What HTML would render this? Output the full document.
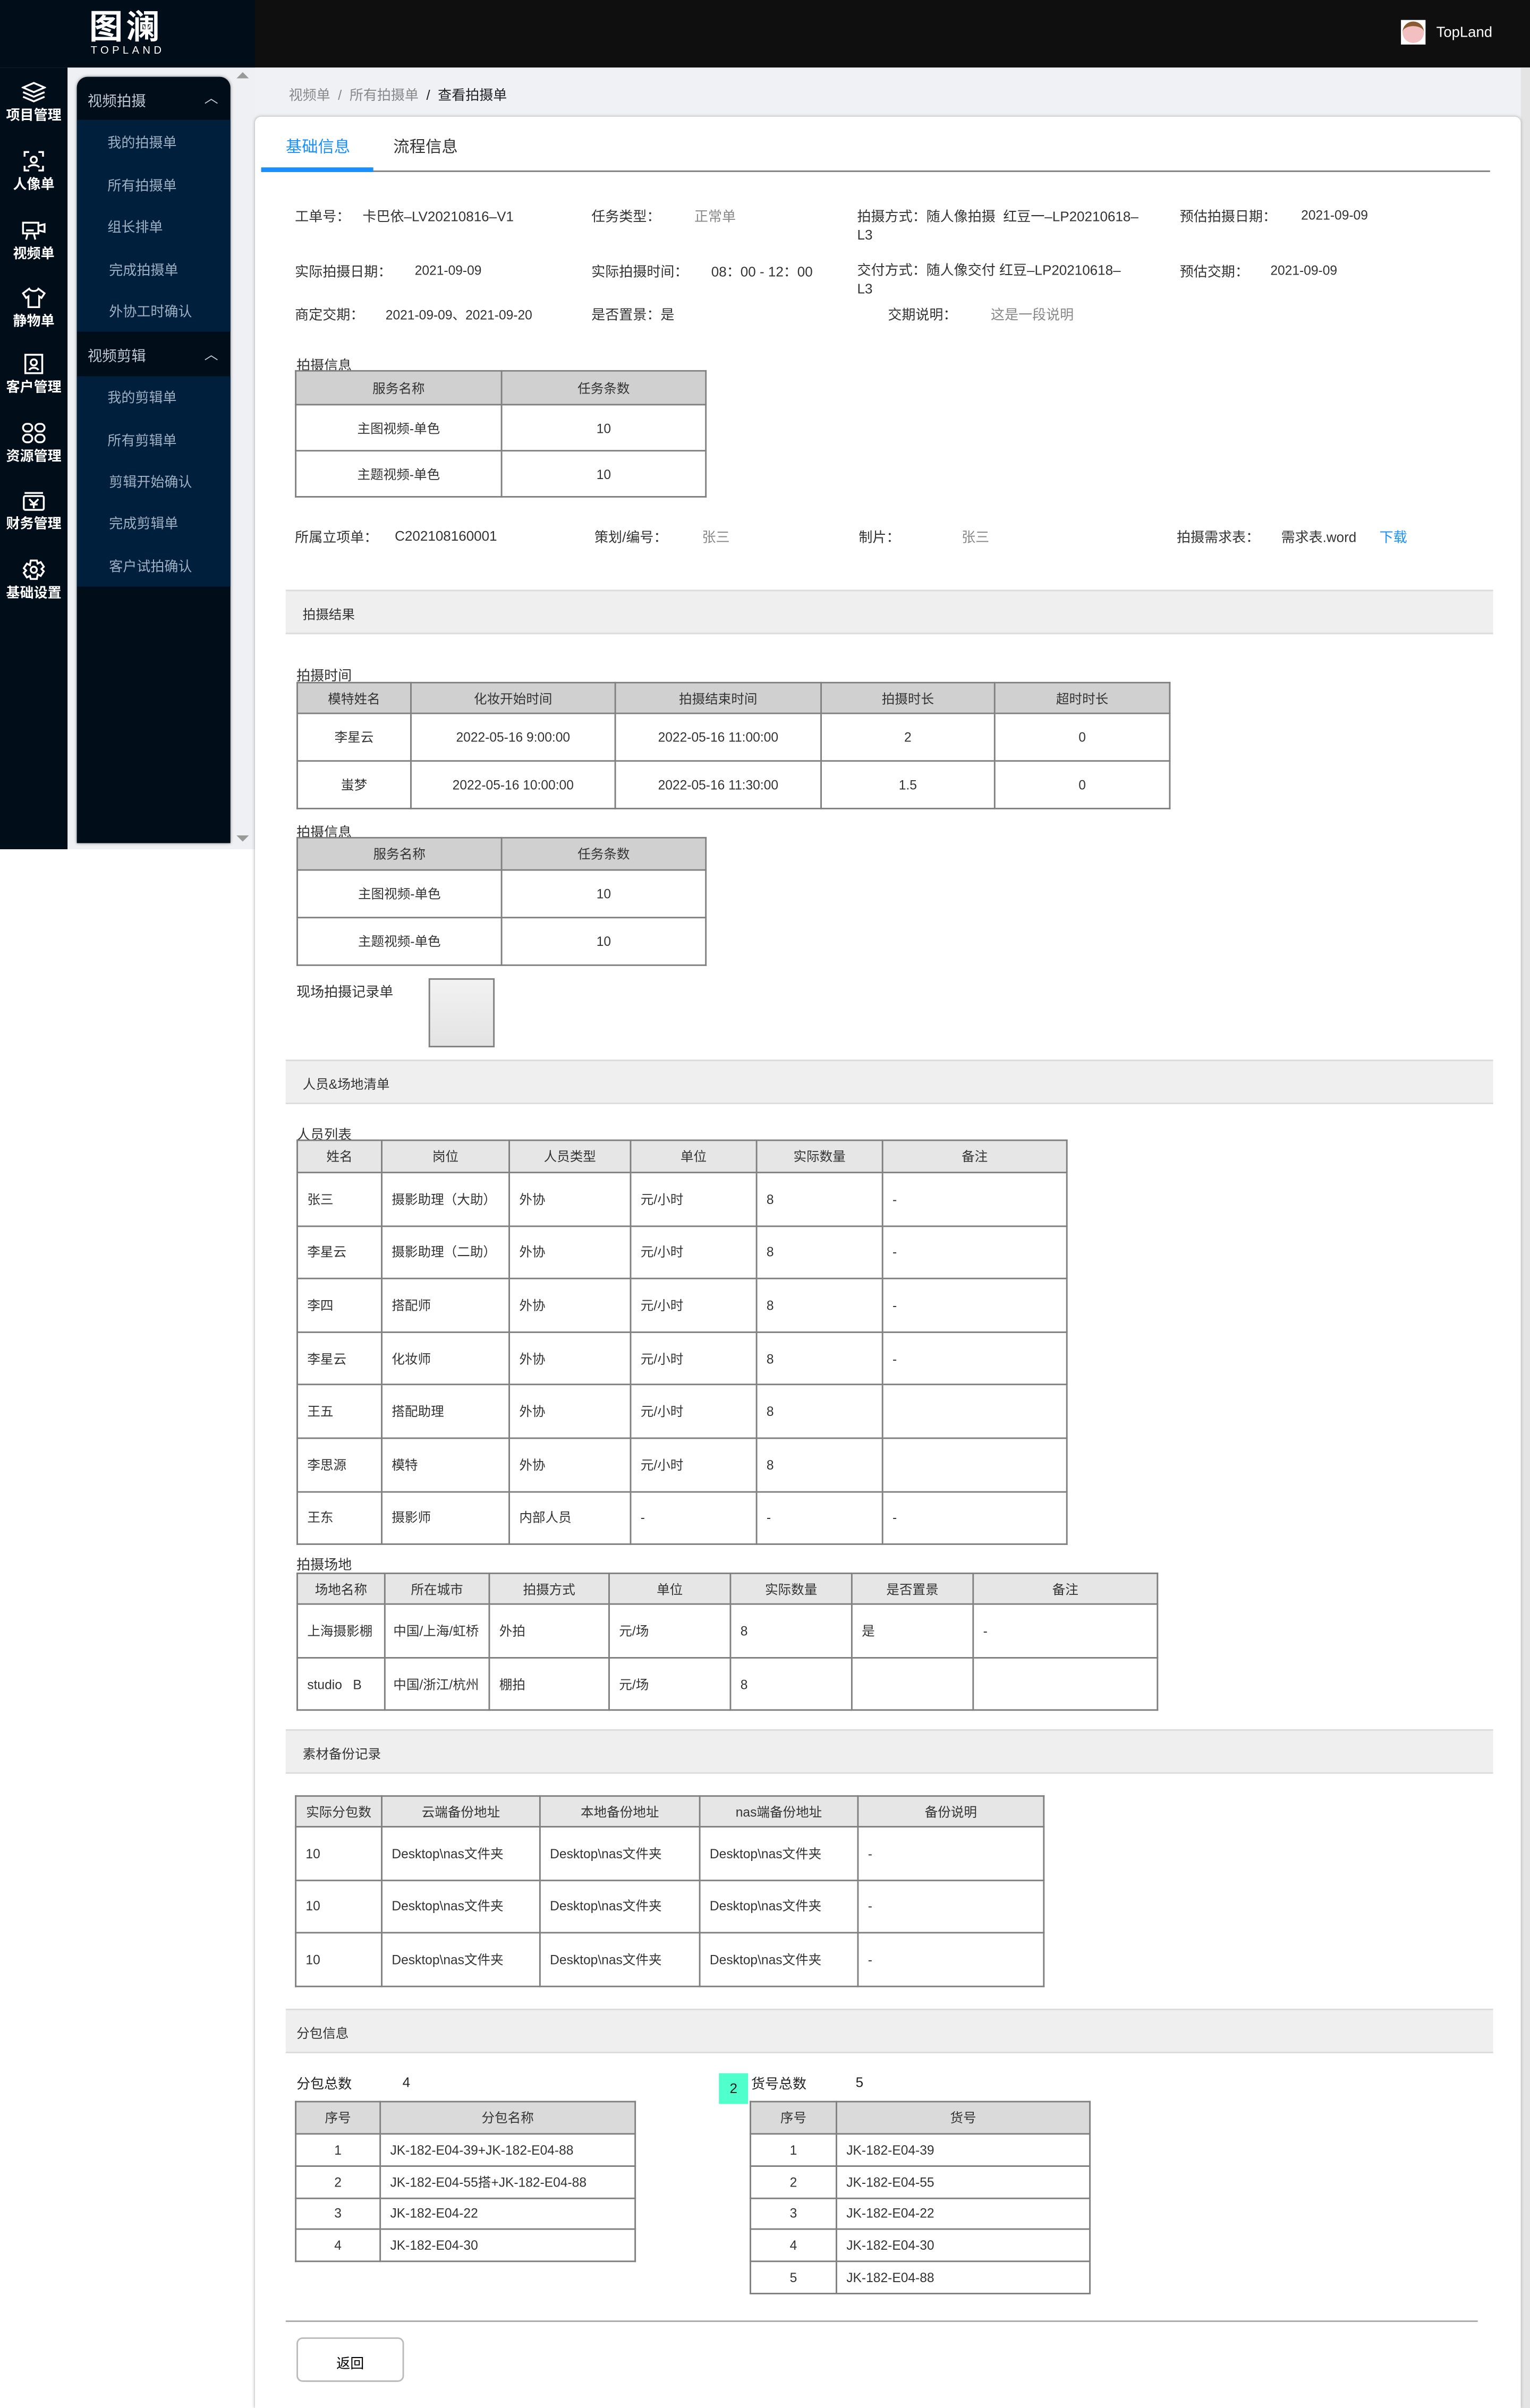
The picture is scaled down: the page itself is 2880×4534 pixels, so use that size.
<!DOCTYPE html>
<html><head><meta charset="utf-8">
<style>
*{margin:0;padding:0;box-sizing:border-box}
html,body{width:2880px;height:4534px;overflow:hidden;background:#fff}
#w{position:absolute;left:0;top:0;width:996px;height:1568px;transform:scale(2.891566);transform-origin:0 0;font-family:"Liberation Sans","Noto Sans CJK SC",sans-serif;color:#333;font-size:9px}
.a{position:absolute;white-space:nowrap}
table{position:absolute;border-collapse:collapse;table-layout:fixed;font-size:8.5px;color:#333}
td,th{border:0.8px solid #7f7f7f;text-align:center;font-weight:normal;overflow:hidden;white-space:nowrap}
th{background:#d0d0d0}
table.l th{background:#e6e6e6}
table.l td{text-align:left;padding-left:6px}
.sec{position:absolute;left:186px;width:786px;height:29px;background:#efefef;border-top:1px solid #dcdcdc;border-bottom:1px solid #dcdcdc;font-size:8.5px;padding:9px 0 0 11px}
.nav{position:absolute;left:0;width:44px;text-align:center;color:#fff;font-size:9px;font-weight:bold}
.nav svg{display:block;margin:0 auto 1px}
.sub{position:absolute;left:70px;color:#9fb0c4;font-size:9px}
.g{color:#888}
.v{font-size:8.5px;margin-top:1px}
</style></head><body><div id="w">
<div class="a" style="left:0;top:0;width:996px;height:44px;background:#0f0f0f"></div>
<div class="a" style="left:0;top:0;width:166px;height:44px;background:#020d1a"></div>
<div class="a" style="left:58px;top:2px;color:#fff;font-size:22px;font-weight:bold;letter-spacing:2px;font-family:'Noto Sans CJK SC',sans-serif;line-height:28px">图澜</div>
<div class="a" style="left:59px;top:30px;color:#fff;font-size:7px;letter-spacing:2.2px">TOPLAND</div>
<div class="a" style="left:912px;top:13px;width:16px;height:16px;background:#fff"><div style="margin:1px;width:14px;height:14px;border-radius:50%;background:#f2c0c0;border-top:3px solid #8a5a30"></div></div>
<div class="a" style="left:935px;top:16px;color:#fff;font-size:9.5px">TopLand</div>
<div class="a" style="left:0;top:44px;width:44px;height:509px;background:#020d1a"></div>
<div class="nav" style="top:53px"><svg width="16" height="14" viewBox="0 0 16 14" fill="none" stroke="#fff" stroke-width="1.2"><path d="M8 1L15 4 8 7 1 4Z M1 7l7 3 7-3 M1 10l7 3 7-3"/></svg>项目管理</div>
<div class="nav" style="top:98px"><svg width="14" height="14" viewBox="0 0 14 14" fill="none" stroke="#fff" stroke-width="1.2"><path d="M1 4V1h3M10 1h3v3M13 10v3h-3M4 13H1v-3"/><circle cx="7" cy="6" r="2"/><path d="M3.5 11c1-2 6-2 7 0"/></svg>人像单</div>
<div class="nav" style="top:143px"><svg width="16" height="14" viewBox="0 0 16 14" fill="none" stroke="#fff" stroke-width="1.2"><rect x="1" y="2" width="10" height="7"/><path d="M11 4l4-1v5l-4-1 M4 9l-1 4 M8 9l1 4 M3 7h5"/></svg>视频单</div>
<div class="nav" style="top:187px"><svg width="16" height="14" viewBox="0 0 16 14" fill="none" stroke="#fff" stroke-width="1.2"><path d="M5 1L1 4l2 3 1.5-1V13h7V6L13 7l2-3-4-3C10 3 6 3 5 1Z"/></svg>静物单</div>
<div class="nav" style="top:230px"><svg width="14" height="14" viewBox="0 0 14 14" fill="none" stroke="#fff" stroke-width="1.2"><rect x="1.5" y="1" width="11" height="12"/><circle cx="7" cy="6" r="2"/><path d="M4 11c1-2 5-2 6 0"/></svg>客户管理</div>
<div class="nav" style="top:275px"><svg width="16" height="14" viewBox="0 0 16 14" fill="none" stroke="#fff" stroke-width="1.2"><rect x="1" y="1" width="6" height="5" rx="2.5"/><rect x="9" y="1" width="6" height="5" rx="2.5"/><rect x="1" y="8" width="6" height="5" rx="2.5"/><rect x="9" y="8" width="6" height="5" rx="2.5"/></svg>资源管理</div>
<div class="nav" style="top:319px"><svg width="16" height="14" viewBox="0 0 16 14" fill="none" stroke="#fff" stroke-width="1.2"><path d="M2 2h12"/><rect x="1.5" y="4" width="13" height="9" rx="1"/><path d="M5 6l3 3 3-3M8 9v3M5.5 9.5h5"/></svg>财务管理</div>
<div class="nav" style="top:364px"><svg width="16" height="14" viewBox="0 0 16 14" fill="none" stroke="#fff" stroke-width="1.2"><path d="M6 1h4l.5 2 2-1 2 3-1.5 1.5 1.5 1.5-2 3-2-1L10 13H6l-.5-2-2 1-2-3L3 7.5 1.5 6l2-3 2 1Z"/><circle cx="8" cy="7" r="2"/></svg>基础设置</div>
<div class="a" style="left:44px;top:44px;width:122px;height:509px;background:#eef0f4"></div>
<div class="a" style="left:50px;top:50px;width:100px;height:499px;background:#020d1a;border-radius:7px 7px 0 0;box-shadow:0 0 2px #888"></div>
<div class="a" style="left:50px;top:78px;width:100px;height:138px;background:#001f3d"></div>
<div class="a" style="left:50px;top:245px;width:100px;height:137px;background:#001f3d"></div>
<div class="a" style="left:57px;top:58px;color:#bfc8d4;font-size:9.5px">视频拍摄</div>
<div class="a" style="left:133px;top:57px;color:#bfc8d4;font-size:9px">︿</div>
<div class="a" style="left:57px;top:224px;color:#bfc8d4;font-size:9.5px">视频剪辑</div>
<div class="a" style="left:133px;top:224px;color:#bfc8d4;font-size:9px">︿</div>
<div class="sub" style="top:86px">我的拍摄单</div>
<div class="sub" style="top:114px">所有拍摄单</div>
<div class="sub" style="top:141px">组长排单</div>
<div class="sub" style="top:169px;left:71px">完成拍摄单</div>
<div class="sub" style="top:196px;left:71px">外协工时确认</div>
<div class="sub" style="top:252px">我的剪辑单</div>
<div class="sub" style="top:280px">所有剪辑单</div>
<div class="sub" style="top:307px;left:71px">剪辑开始确认</div>
<div class="sub" style="top:334px;left:71px">完成剪辑单</div>
<div class="sub" style="top:362px;left:71px">客户试拍确认</div>
<div class="a" style="left:154px;top:47px;width:0;height:0;border-left:4px solid transparent;border-right:4px solid transparent;border-bottom:4px solid #999"></div>
<div class="a" style="left:154px;top:544px;width:0;height:0;border-left:4px solid transparent;border-right:4px solid transparent;border-top:4px solid #999"></div>
<div class="a" style="left:166px;top:44px;width:830px;height:1524px;background:#eff1f5"></div>
<div class="a" style="left:990px;top:44px;width:6px;height:1524px;background:#e4e4e4"></div>
<div class="a" style="left:188px;top:55px;font-size:9px;color:#888">视频单 &nbsp;/&nbsp; 所有拍摄单 &nbsp;<span style="color:#222">/ &nbsp;查看拍摄单</span></div>
<div class="a" style="left:166px;top:76px;width:824px;height:1492px;background:#fff;border-radius:4px 4px 0 0;box-shadow:0 0 2px #aaa"></div>
<div class="a" style="left:186px;top:88px;font-size:10.5px;color:#1890ff">基础信息</div>
<div class="a" style="left:256px;top:88px;font-size:10.5px;color:#333">流程信息</div>
<div class="a" style="left:170px;top:111px;width:800px;height:1px;background:#808080"></div>
<div class="a" style="left:170px;top:109px;width:73px;height:3px;background:#1890ff"></div>
<div class="a" style="left:192px;top:134px">工单号：</div><div class="a" style="left:236px;top:134px">卡巴依–LV20210816–V1</div>
<div class="a" style="left:385px;top:134px">任务类型：</div><div class="a g" style="left:452px;top:134px">正常单</div>
<div class="a" style="left:558px;top:134px">拍摄方式：随人像拍摄 &nbsp;红豆一–LP20210618–</div>
<div class="a" style="left:558px;top:148px">L3</div>
<div class="a" style="left:768px;top:134px">预估拍摄日期：</div><div class="a v" style="left:847px;top:134px">2021-09-09</div>
<div class="a" style="left:192px;top:170px">实际拍摄日期：</div><div class="a v" style="left:270px;top:170px">2021-09-09</div>
<div class="a" style="left:385px;top:170px">实际拍摄时间：</div><div class="a" style="left:463px;top:170px">08：00 - 12：00</div>
<div class="a" style="left:558px;top:169px">交付方式：随人像交付 红豆–LP20210618–</div>
<div class="a" style="left:558px;top:183px">L3</div>
<div class="a" style="left:768px;top:170px">预估交期：</div><div class="a v" style="left:827px;top:170px">2021-09-09</div>
<div class="a" style="left:192px;top:198px">商定交期：</div><div class="a v" style="left:251px;top:198px">2021-09-09、2021-09-20</div>
<div class="a" style="left:385px;top:198px">是否置景：是</div>
<div class="a" style="left:578px;top:198px">交期说明：</div><div class="a g" style="left:645px;top:198px">这是一段说明</div>
<div class="a" style="left:193px;top:231px">拍摄信息</div>
<table style="left:192px;top:241px;width:267px"><col width="134"><col width="133">
<tr style="height:22px"><th>服务名称</th><th>任务条数</th></tr>
<tr style="height:30px"><td>主图视频-单色</td><td>10</td></tr>
<tr style="height:30px"><td>主题视频-单色</td><td>10</td></tr></table>
<div class="a" style="left:192px;top:343px">所属立项单：</div><div class="a" style="left:257px;top:344px">C202108160001</div>
<div class="a" style="left:387px;top:343px">策划/编号：</div><div class="a g" style="left:457px;top:343px">张三</div>
<div class="a" style="left:559px;top:343px">制片：</div><div class="a g" style="left:626px;top:343px">张三</div>
<div class="a" style="left:766px;top:343px">拍摄需求表：</div><div class="a" style="left:834px;top:343px">需求表.word</div><div class="a" style="left:898px;top:343px;color:#1890ff">下载</div>
<div class="sec" style="top:384px">拍摄结果</div>
<div class="a" style="left:193px;top:433px">拍摄时间</div>
<table style="left:193px;top:444px;width:568px"><col width="74"><col width="133"><col width="134"><col width="113"><col width="114">
<tr style="height:20px"><th>模特姓名</th><th>化妆开始时间</th><th>拍摄结束时间</th><th>拍摄时长</th><th>超时时长</th></tr>
<tr style="height:31px"><td>李星云</td><td>2022-05-16 9:00:00</td><td>2022-05-16 11:00:00</td><td>2</td><td>0</td></tr>
<tr style="height:31px"><td>蚩梦</td><td>2022-05-16 10:00:00</td><td>2022-05-16 11:30:00</td><td>1.5</td><td>0</td></tr></table>
<div class="a" style="left:193px;top:535px">拍摄信息</div>
<table style="left:193px;top:545px;width:266px"><col width="133"><col width="133">
<tr style="height:21px"><th>服务名称</th><th>任务条数</th></tr>
<tr style="height:31px"><td>主图视频-单色</td><td>10</td></tr>
<tr style="height:31px"><td>主题视频-单色</td><td>10</td></tr></table>
<div class="a" style="left:193px;top:639px">现场拍摄记录单</div>
<div class="a" style="left:279px;top:637px;width:43px;height:45px;border:0.8px solid #7f7f7f;background:linear-gradient(#f2f2f2,#e3e3e3)"></div>
<div class="sec" style="top:690px">人员&amp;场地清单</div>
<div class="a" style="left:193px;top:732px">人员列表</div>
<table class="l" style="left:193px;top:742px;width:501px"><col width="55"><col width="83"><col width="79"><col width="82"><col width="82"><col width="120">
<tr style="height:21px"><th>姓名</th><th>岗位</th><th>人员类型</th><th>单位</th><th>实际数量</th><th>备注</th></tr>
<tr style="height:34.6px"><td>张三</td><td>摄影助理（大助）</td><td>外协</td><td>元/小时</td><td>8</td><td>-</td></tr>
<tr style="height:34.6px"><td>李星云</td><td>摄影助理（二助）</td><td>外协</td><td>元/小时</td><td>8</td><td>-</td></tr>
<tr style="height:34.6px"><td>李四</td><td>搭配师</td><td>外协</td><td>元/小时</td><td>8</td><td>-</td></tr>
<tr style="height:34.6px"><td>李星云</td><td>化妆师</td><td>外协</td><td>元/小时</td><td>8</td><td>-</td></tr>
<tr style="height:34.6px"><td>王五</td><td>搭配助理</td><td>外协</td><td>元/小时</td><td>8</td><td></td></tr>
<tr style="height:34.6px"><td>李思源</td><td>模特</td><td>外协</td><td>元/小时</td><td>8</td><td></td></tr>
<tr style="height:34.6px"><td>王东</td><td>摄影师</td><td>内部人员</td><td>-</td><td>-</td><td>-</td></tr></table>
<div class="a" style="left:193px;top:1012px">拍摄场地</div>
<table class="l" style="left:193px;top:1024px;width:560px"><col width="57"><col width="68"><col width="78"><col width="79"><col width="79"><col width="79"><col width="120">
<tr style="height:20px"><th>场地名称</th><th>所在城市</th><th>拍摄方式</th><th>单位</th><th>实际数量</th><th>是否置景</th><th>备注</th></tr>
<tr style="height:35px"><td>上海摄影棚</td><td style="padding-left:5px">中国/上海/虹桥</td><td>外拍</td><td>元/场</td><td>8</td><td>是</td><td>-</td></tr>
<tr style="height:34px"><td>studio &nbsp;&nbsp;B</td><td style="padding-left:5px">中国/浙江/杭州</td><td>棚拍</td><td>元/场</td><td>8</td><td></td><td></td></tr></table>
<div class="sec" style="top:1126px">素材备份记录</div>
<table class="l" style="left:192px;top:1169px;width:487px"><col width="56"><col width="103"><col width="104"><col width="103"><col width="121">
<tr style="height:20px"><th>实际分包数</th><th>云端备份地址</th><th>本地备份地址</th><th>nas端备份地址</th><th>备份说明</th></tr>
<tr style="height:34.5px"><td>10</td><td>Desktop\nas文件夹</td><td>Desktop\nas文件夹</td><td>Desktop\nas文件夹</td><td>-</td></tr>
<tr style="height:34.5px"><td>10</td><td>Desktop\nas文件夹</td><td>Desktop\nas文件夹</td><td>Desktop\nas文件夹</td><td>-</td></tr>
<tr style="height:34.5px"><td>10</td><td>Desktop\nas文件夹</td><td>Desktop\nas文件夹</td><td>Desktop\nas文件夹</td><td>-</td></tr></table>
<div class="sec" style="top:1308px;padding-left:7px">分包信息</div>
<div class="a" style="left:193px;top:1350px;color:#222">分包总数</div><div class="a" style="left:262px;top:1351px;color:#222">4</div>
<table style="left:192px;top:1368px;width:221px"><col width="55"><col width="166">
<tr style="height:21px"><th style="background:#dadada">序号</th><th style="background:#dadada">分包名称</th></tr>
<tr style="height:20.8px"><td>1</td><td style="text-align:left;padding-left:6px">JK-182-E04-39+JK-182-E04-88</td></tr>
<tr style="height:20.8px"><td>2</td><td style="text-align:left;padding-left:6px">JK-182-E04-55搭+JK-182-E04-88</td></tr>
<tr style="height:20.8px"><td>3</td><td style="text-align:left;padding-left:6px">JK-182-E04-22</td></tr>
<tr style="height:20.8px"><td>4</td><td style="text-align:left;padding-left:6px">JK-182-E04-30</td></tr></table>
<div class="a" style="left:468px;top:1350px;width:19px;height:20px;background:#4fffcc;color:#222;text-align:center;padding-top:5px;font-size:9px">2</div>
<div class="a" style="left:489px;top:1350px;color:#222">货号总数</div><div class="a" style="left:557px;top:1351px;color:#222">5</div>
<table style="left:488px;top:1368px;width:221px"><col width="56"><col width="165">
<tr style="height:21px"><th style="background:#dadada">序号</th><th style="background:#dadada">货号</th></tr>
<tr style="height:20.8px"><td>1</td><td style="text-align:left;padding-left:6px">JK-182-E04-39</td></tr>
<tr style="height:20.8px"><td>2</td><td style="text-align:left;padding-left:6px">JK-182-E04-55</td></tr>
<tr style="height:20.8px"><td>3</td><td style="text-align:left;padding-left:6px">JK-182-E04-22</td></tr>
<tr style="height:20.8px"><td>4</td><td style="text-align:left;padding-left:6px">JK-182-E04-30</td></tr>
<tr style="height:20.8px"><td>5</td><td style="text-align:left;padding-left:6px">JK-182-E04-88</td></tr></table>
<div class="a" style="left:186px;top:1511px;width:776px;height:1px;background:#aaa"></div>
<div class="a" style="left:193px;top:1522px;width:70px;height:29px;border:0.8px solid #bbb;border-radius:4px;text-align:center;padding-top:9px;color:#000;font-size:9px">返回</div>
</div></body></html>
